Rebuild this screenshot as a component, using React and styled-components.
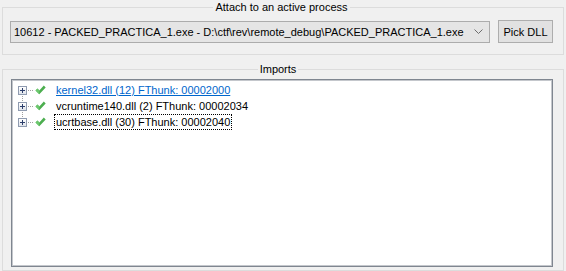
import React from 'react';
import styled, { createGlobalStyle } from 'styled-components';

const GlobalStyle = createGlobalStyle`
	html, body {
		margin: 0;
		padding: 0;
		background: #f0f0f0;
	}
	body {
		width: 566px;
		height: 271px;
		overflow: hidden;
		font-family: 'Liberation Sans', Arial, sans-serif;
		font-size: 11px;
		color: #000;
	}
`;

const Page = styled.div`
	display: flex;
	flex-direction: column;
	padding: 0 2px;
`;

const Group = styled.fieldset`
	margin: ${props => props.top || 0}px 0 0 0;
	padding: ${props => props.pad};
	border: 1px solid #dcdcdc;
	min-width: 0;
`;

const Legend = styled.legend`
	margin: 0 auto;
	padding: 0 2px;
	line-height: 14px;
	font-size: 11px;
`;

const ProcessRow = styled.div`
	display: flex;
	align-items: center;
	gap: 8px;
`;

const Combo = styled.div`
	box-sizing: border-box;
	width: 480px;
	height: 22px;
	display: flex;
	align-items: center;
	justify-content: space-between;
	padding: 0 6px 0 3px;
	background: #e5e5e5;
	border: 1px solid #acacac;
	white-space: nowrap;
	overflow: hidden;
	svg {
		flex: none;
	}
`;

const Button = styled.button`
	box-sizing: border-box;
	width: 55px;
	height: 23px;
	padding: 0;
	background: #e1e1e1;
	border: 1px solid #adadad;
	font-family: inherit;
	font-size: 11px;
	color: #000;
`;

const TreeBox = styled.div`
	box-sizing: border-box;
	height: 188px;
	margin-left: 8px;
	background: #fff;
	border: 1px solid #7f8690;
	box-shadow: inset -1px -1px 0 #c4c7cc, inset 1px 1px 0 #c4c7cc;
	padding: 2px 0 0 6px;
`;

const Row = styled.div`
	display: flex;
	align-items: center;
	height: 16px;
`;

const Lines = styled.div`
	width: 9px;
	height: 16px;
	display: flex;
	align-items: center;
	background-image: repeating-linear-gradient(to bottom, #a0a0a0 0 1px, transparent 1px 2px);
	background-repeat: no-repeat;
	background-size: 1px ${props => (props.pos === 'mid' ? 16 : 8)}px;
	background-position: 4px ${props => (props.pos === 'first' ? '8px' : '0')};
`;

const Expander = styled.div`
	box-sizing: border-box;
	width: 9px;
	height: 9px;
	border: 1px solid #8f9bb0;
	background: linear-gradient(#ffffff, #dfe3ea);
	display: flex;
	align-items: center;
	justify-content: center;
	svg {
		display: block;
	}
`;

const Connector = styled.div`
	width: 6px;
	height: 1px;
	margin-left: 1px;
	background-image: repeating-linear-gradient(to right, #a0a0a0 0 1px, transparent 1px 2px);
`;

const Check = styled.svg`
	width: 11px;
	height: 10px;
	margin: 0 8px 0 1px;
`;

const Label = styled.span`
	padding: 0 1px;
	line-height: 14px;
	border: 1px dotted ${props => (props.focused ? '#000' : 'transparent')};
	color: ${props => (props.link ? '#0066cc' : '#000')};
	text-decoration: ${props => (props.link ? 'underline' : 'none')};
	white-space: nowrap;
`;

const imports = [
	{ name: 'kernel32.dll (12) FThunk: 00002000', link: true },
	{ name: 'vcruntime140.dll (2) FThunk: 00002034' },
	{ name: 'ucrtbase.dll (30) FThunk: 00002040', focused: true }
];

const CheckIcon = () => (
	<Check viewBox="0 0 11 10">
		<path d="M0.5 5.5 L2.5 3.5 L4.3 5.4 L8.8 0.5 L10.7 2.4 L4.3 9.3 Z" fill="#4cae4f" />
		<path d="M0.5 5.5 L2.5 3.5 L4.3 5.4 L4.3 9.3 Z" fill="#6cc86e" />
	</Check>
);

const Plus = () => (
	<Expander>
		<svg width="5" height="5" viewBox="0 0 5 5">
			<rect x="0" y="2" width="5" height="1" fill="#2c3e6b" />
			<rect x="2" y="0" width="1" height="5" fill="#2c3e6b" />
		</svg>
	</Expander>
);

export default function App() {
	return (
		<Page>
			<GlobalStyle />
			<Group pad="6px 10px 11px 7px">
				<Legend>Attach to an active process</Legend>
				<ProcessRow>
					<Combo>
						<span>10612 - PACKED_PRACTICA_1.exe - D:\ctf\rev\remote_debug\PACKED_PRACTICA_1.exe</span>
						<svg width="9" height="5" viewBox="0 0 9 5">
							<path d="M0.5 0.5 L4.5 4.5 L8.5 0.5" stroke="#6d6d6d" fill="none" />
						</svg>
					</Combo>
					<Button>Pick DLL</Button>
				</ProcessRow>
			</Group>
			<Group top={7} pad="3px 10px 3px 0">
				<Legend>Imports</Legend>
				<TreeBox>
					{imports.map((item, i) => (
						<Row key={item.name}>
							<Lines pos={i === 0 ? 'first' : i === imports.length - 1 ? 'last' : 'mid'}>
								<Plus />
							</Lines>
							<Connector />
							<CheckIcon />
							<Label link={item.link} focused={item.focused}>
								{item.name}
							</Label>
						</Row>
					))}
				</TreeBox>
			</Group>
		</Page>
	);
}
